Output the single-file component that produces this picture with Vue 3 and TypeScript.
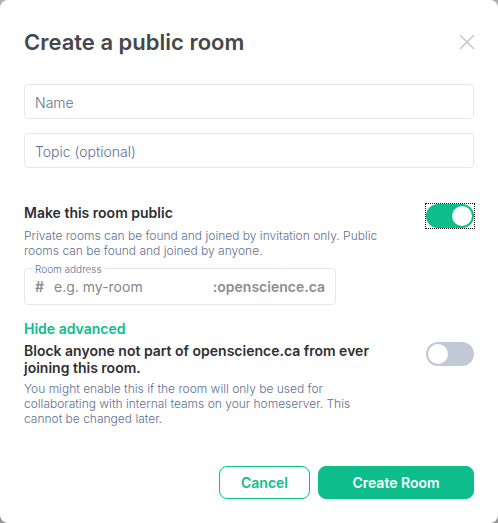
<script setup lang="ts">
import { ref } from 'vue'

const name = ref('')
const topic = ref('')
const alias = ref('')
const isPublic = ref(true)
const noFederate = ref(false)
const showAdvanced = ref(true)
const server = 'openscience.ca'
</script>

<template>
  <main class="backdrop">
    <form class="dialog" role="dialog" aria-labelledby="dialog-title" @submit.prevent>
      <header class="header">
        <h1 id="dialog-title" class="title">Create a public room</h1>
        <button class="close" type="button" aria-label="Close">
          <svg width="14" height="14" viewBox="0 0 14 14" fill="none" stroke="#c1c1c1" stroke-width="1.3">
            <path d="M0 0L14 14M14 0L0 14" />
          </svg>
        </button>
      </header>

      <div class="fields">
        <input v-model="name" class="field" type="text" placeholder="Name" aria-label="Name" />
        <input v-model="topic" class="field" type="text" placeholder="Topic (optional)" aria-label="Topic (optional)" />
      </div>

      <section class="setting">
        <div class="copy">
          <label class="label" for="public-toggle">Make this room public</label>
          <p class="hint">Private rooms can be found and joined by invitation only. Public rooms can be found and joined by anyone.</p>
        </div>
        <input id="public-toggle" v-model="isPublic" class="switch focused" type="checkbox" role="switch" />
      </section>

      <div class="address">
        <label class="address-label" for="room-address">Room address</label>
        <span class="affix">#</span>
        <input id="room-address" v-model="alias" class="address-input" type="text" placeholder="e.g. my-room" />
        <span class="affix">:{{ server }}</span>
      </div>

      <button class="advanced" type="button" @click="showAdvanced = !showAdvanced">
        {{ showAdvanced ? 'Hide advanced' : 'Show advanced' }}
      </button>

      <section v-if="showAdvanced" class="setting">
        <div class="copy">
          <label class="label" for="federate-toggle">Block anyone not part of {{ server }} from ever joining this room.</label>
          <p class="hint">You might enable this if the room will only be used for collaborating with internal teams on your homeserver. This cannot be changed later.</p>
        </div>
        <input id="federate-toggle" v-model="noFederate" class="switch" type="checkbox" role="switch" />
      </section>

      <footer class="footer">
        <button class="button outline" type="button">Cancel</button>
        <button class="button primary" type="submit">Create Room</button>
      </footer>
    </form>
  </main>
</template>

<style>
body {
  margin: 0;
  background: #a3a3a3;
}
</style>

<style scoped>
.backdrop,
.backdrop * {
  box-sizing: border-box;
}

.backdrop {
  display: flex;
  min-height: 100vh;
  background: linear-gradient(#b0b0b0, #949494);
  font-family: Inter, "Liberation Sans", sans-serif;
  font-size: 14px;
  font-weight: 300;
}

.backdrop button,
.backdrop input {
  font-family: inherit;
}

.dialog {
  display: flex;
  flex: 1;
  flex-direction: column;
  padding: 24px;
  border-radius: 8px;
  background: #fff;
}

.header {
  display: flex;
  align-items: center;
  justify-content: space-between;
  height: 36px;
  margin-bottom: 24px;
}

.title {
  margin: 0;
  color: #45474a;
  font-size: 22px;
  font-weight: 600;
  line-height: 36px;
}

.close {
  display: flex;
  padding: 0;
  border: 0;
  background: none;
}

.fields {
  display: flex;
  flex-direction: column;
  gap: 14px;
  margin-bottom: 36px;
}

.field {
  width: 100%;
  height: 35px;
  padding: 2px 10px 0;
  border: 1px solid #e7e7e7;
  border-radius: 4px;
  outline: 0;
  background: #fff;
  color: #2e2f32;
  font-size: 14px;
  font-weight: 300;
}

.field::placeholder {
  color: #606f8f;
  opacity: 1;
}

.setting {
  display: flex;
  align-items: flex-start;
  justify-content: space-between;
}

.copy {
  width: 360px;
}

.label {
  display: block;
  min-height: 19px;
  color: #2e2f32;
  font-size: 14px;
  font-weight: 600;
  line-height: 17px;
}

.hint {
  margin: 5px 0 0;
  color: #606f8f;
  font-size: 12px;
  line-height: 15px;
}

.switch {
  position: relative;
  flex: none;
  width: 48px;
  height: 24px;
  margin: 0;
  border-radius: 12px;
  appearance: none;
  background: #c1c9d6;
}

.switch::before {
  position: absolute;
  top: 2px;
  left: 2px;
  width: 20px;
  height: 20px;
  border-radius: 50%;
  background: #fff;
  content: "";
}

.switch:checked {
  background: #0dbd8b;
}

.switch:checked::before {
  left: 26px;
}

.focused::after {
  position: absolute;
  inset: -1px;
  border: 1px dotted #101010;
  content: "";
}

.address {
  position: relative;
  display: flex;
  align-items: center;
  width: 312px;
  height: 37px;
  margin: 10px 0 15px;
  padding: 0 10px;
  border: 1px solid #e7e7e7;
  border-radius: 4px;
}

.address-label {
  position: absolute;
  top: -7px;
  left: 8px;
  padding: 0 2px;
  background: #fff;
  color: #606f8f;
  font-size: 10px;
  line-height: 15px;
}

.affix {
  color: #8d8d8d;
  font-weight: 600;
}

.address-input {
  flex: 1;
  min-width: 0;
  padding: 0 10px;
  border: 0;
  outline: 0;
  background: none;
  color: #2e2f32;
  font-size: 14px;
  font-weight: 400;
}

.address-input::placeholder {
  color: #888;
  opacity: 1;
}

.advanced {
  align-self: flex-start;
  margin-bottom: 5px;
  padding: 0;
  border: 0;
  background: none;
  color: #0dbd8b;
  font-size: 14px;
  font-weight: 600;
  line-height: 17px;
}

.footer {
  display: flex;
  justify-content: flex-end;
  gap: 8px;
  margin-top: auto;
}

.button {
  height: 33px;
  border: 1px solid #0dbd8b;
  border-radius: 8px;
  font-size: 14px;
  font-weight: 600;
}

.outline {
  padding: 0 21px;
  background: #fff;
  color: #0dbd8b;
}

.primary {
  min-width: 156px;
  padding: 0 32px;
  background: #0dbd8b;
  color: #fff;
}
</style>
